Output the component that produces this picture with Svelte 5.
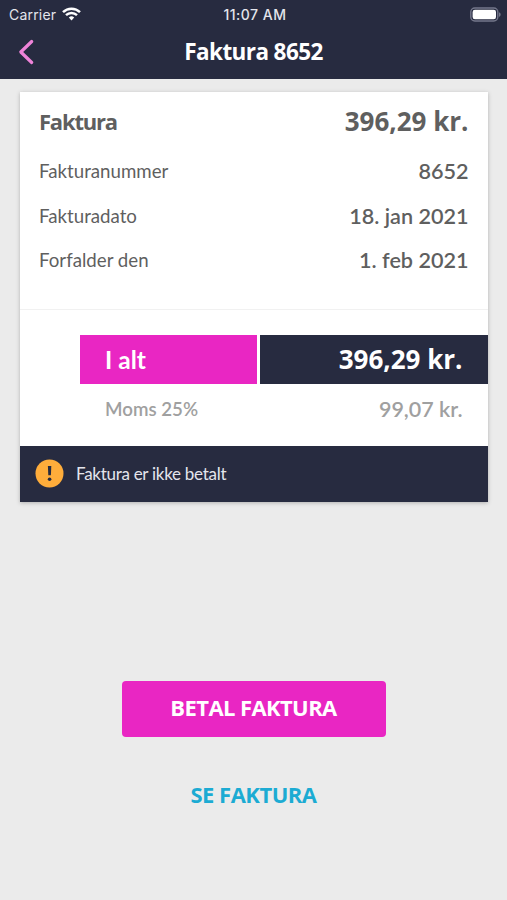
<script>
    // invoice data
    export let number = '8652';
    export let total = '396,29 kr.';
    export let vat = '99,07 kr.';
    export let paid = false;

    const rows = [
        { label: 'Fakturanummer', value: number },
        { label: 'Fakturadato', value: '18. jan 2021' },
        { label: 'Forfalder den', value: '1. feb 2021' }
    ];
</script>

<style>
:global(body) {
    margin: 0;
    background: #ebebeb;
}
.screen {
    width: 507px;
    height: 900px;
    display: flex;
    flex-direction: column;
    overflow: hidden;
    background: #ebebeb;
    font-family: Lato, sans-serif;
    color: #5f5f5f;
}
button {
    border: 0;
    padding: 0;
    background: transparent;
    cursor: pointer;
}
svg {
    display: block;
}

/* top bar */
.top {
    height: 79px;
    flex: none;
    background: #272b40;
    color: #fff;
}
.status {
    display: grid;
    grid-template-columns: 1fr auto 1fr;
    align-items: center;
    height: 27px;
    padding: 0 6px 0 9px;
    font: 500 14px/27px Inter, sans-serif;
    color: #e4e5ec;
}
.time {
    padding-top: 1px;
    letter-spacing: 0.5px;
}
.carrier {
    display: flex;
    align-items: center;
    gap: 6px;
    font-weight: 400;
    font-size: 14px;
    letter-spacing: 0.2px;
}
.battery {
    justify-self: end;
}
.nav {
    display: grid;
    grid-template-columns: 54px 1fr 54px;
    align-items: center;
    height: 50px;
}
.back {
    padding-left: 18px;
}
h1, h2 {
    margin: 0;
}
h1 {
    text-align: center;
    font: 700 22.5px/50px "Open Sans", sans-serif;
    letter-spacing: -0.6px;
}

/* invoice card */
.card {
    flex: none;
    width: 467.5px;
    margin: 13px 0 0 20px;
    background: #fff;
    box-shadow: 0 1px 4px rgba(0, 0, 0, 0.25);
}
.details {
    height: 218px;
    padding: 8px 19px 0 19px;
    box-sizing: border-box;
    border-bottom: 1px solid #f1f1f1;
}
.row {
    display: flex;
    align-items: center;
    justify-content: space-between;
    height: 44.4px;
    font-size: 18.7px;
}
.row strong {
    font-size: 21.6px;
    font-weight: 600;
}
.heading {
    height: 43px;
    margin-bottom: 6px;
}
h2 {
    font: 700 22px/43px "Open Sans", sans-serif;
    letter-spacing: -1.2px;
}
.row .amount {
    font: 700 26px/43px "Open Sans", sans-serif;
}
.totals {
    height: 135.5px;
    padding: 25px 0 0 60px;
    box-sizing: border-box;
}
.sum {
    display: grid;
    grid-template-columns: 177px 228px;
    gap: 2.5px;
    height: 48px;
    line-height: 49px;
    color: #fff;
}
.sumLabel {
    padding-left: 25px;
    background: #e926c3;
    font-size: 24.5px;
    font-weight: 700;
}
.sumValue {
    padding-right: 25px;
    text-align: right;
    background: #272b40;
    font: 700 26px/48px "Open Sans", sans-serif;
}
.vat {
    display: flex;
    align-items: center;
    justify-content: space-between;
    height: 52px;
    padding: 0 25px;
    color: #a0a0a0;
    font-size: 18.7px;
    font-weight: 600;
}
.vat span:last-child {
    font-size: 21.5px;
}
.notice {
    display: flex;
    align-items: center;
    gap: 12px;
    height: 56.5px;
    padding-left: 15px;
    background: #272b40;
    color: #e4e5ec;
    font-size: 17px;
    letter-spacing: -0.28px;
}

/* actions */
.actions {
    display: flex;
    flex-direction: column;
    align-items: center;
    margin-top: 179px;
}
.actions button {
    height: 56px;
    padding-bottom: 3px;
    box-sizing: border-box;
    font: 700 22px/53px "Open Sans", sans-serif;
    letter-spacing: -0.6px;
}
.pay {
    width: 264px;
    border-radius: 4px;
    background: #e926c3;
    color: #fff;
}
.actions .show {
    margin-top: 31px;
    color: #1cabd3;
    letter-spacing: -0.5px;
}
</style>

<div class="screen">
    <header class="top">
        <div class="status">
            <div class="carrier">
                <span>Carrier</span>
                <svg width="19" height="14" viewBox="0 0 19 14" fill="none" stroke="#fff" stroke-width="2.5">
                    <path d="M1 5.1a12.2 12.2 0 0 1 17 0" />
                    <path d="M4 8.2a8 8 0 0 1 11 0" />
                    <path d="M6.8 10.6a4 4 0 0 1 5.4 0L9.5 13.5z" fill="#fff" stroke="none" />
                </svg>
            </div>
            <div class="time">11:07 AM</div>
            <svg class="battery" width="31" height="15" viewBox="0 0 31 15">
                <rect x="0.8" y="1" width="27" height="13" rx="4" fill="none" stroke="#74778a" stroke-width="1.4" />
                <rect x="2.6" y="2.8" width="23.4" height="9.4" rx="2.3" fill="#fff" />
                <path d="M29 5.2c2.2.8 2.2 3.8 0 4.6z" fill="#74778a" />
            </svg>
        </div>
        <div class="nav">
            <button class="back" aria-label="Tilbage">
                <svg width="17" height="26" viewBox="0 0 17 26" fill="none" stroke="#ee83d8" stroke-width="3.2" stroke-linecap="round" stroke-linejoin="round">
                    <path d="M13.7 2.5L2.8 13L13.7 23.5" />
                </svg>
            </button>
            <h1>Faktura {number}</h1>
        </div>
    </header>

    <section class="card">
        <div class="details">
            <div class="row heading">
                <h2>Faktura</h2>
                <strong class="amount">{total}</strong>
            </div>
            {#each rows as row}
            <div class="row">
                <span>{row.label}</span>
                <strong>{row.value}</strong>
            </div>
            {/each}
        </div>
        <div class="totals">
            <div class="sum">
                <div class="sumLabel">I alt</div>
                <div class="sumValue">{total}</div>
            </div>
            <div class="vat">
                <span>Moms 25%</span>
                <span>{vat}</span>
            </div>
        </div>
        {#if !paid}
        <div class="notice">
            <svg width="29" height="29" viewBox="0 0 29 29">
                <circle cx="14.5" cy="14.5" r="14" fill="#ffad3b" />
                <path d="M12.9 7h3.4l-.4 9.3h-2.6z" fill="#272b40" />
                <circle cx="14.6" cy="20.2" r="1.8" fill="#272b40" />
            </svg>
            <span>Faktura er ikke betalt</span>
        </div>
        {/if}
    </section>

    <div class="actions">
        <button class="pay">BETAL FAKTURA</button>
        <button class="show">SE FAKTURA</button>
    </div>
</div>
